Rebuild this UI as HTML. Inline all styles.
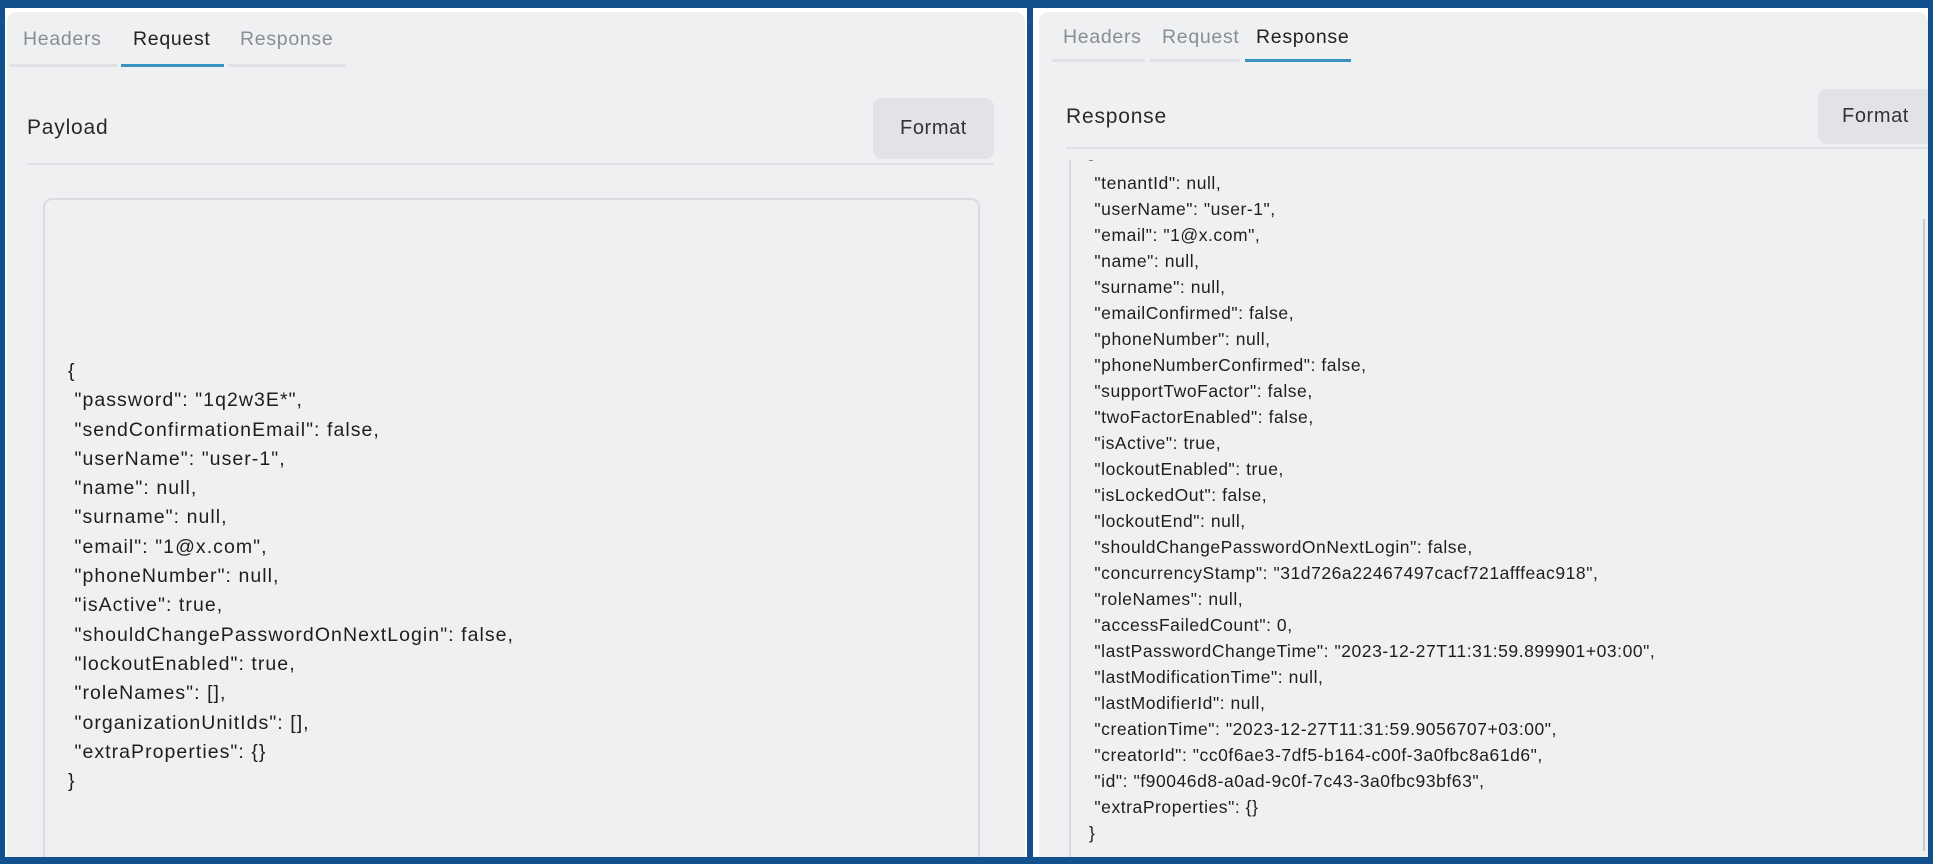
<!DOCTYPE html>
<html><head><meta charset="utf-8"><style>
*{margin:0;padding:0;box-sizing:border-box}
html,body{width:1933px;height:864px;overflow:hidden;background:#12508e;font-family:"Liberation Sans",sans-serif;color:#222}
.white{position:absolute;background:#fff}
.panel{position:absolute;background:#eff0f2;border-radius:10px 10px 0 0;overflow:hidden}
.tab{position:absolute;font-size:19.5px;letter-spacing:0.7px;color:#8a8d91}
.tab.act{color:#222}
.ul{position:absolute;height:3px;background:#dfe1e4}
.ul.act{background:#3d93c0}
.title{position:absolute;font-size:21px;letter-spacing:0.8px;color:#2a2a2a}
.btn{position:absolute;background:#e2e3e6;border-radius:9px;font-size:20px;letter-spacing:0.6px;color:#333;display:flex;align-items:center;justify-content:center}
.sep{position:absolute;height:2px;background:#dfe1e4}
.code{position:absolute;white-space:pre;color:#1e1e1e}
</style></head><body>
<div class="white" style="left:5px;top:8px;width:1022px;height:849px"></div>
<div class="white" style="left:1033px;top:8px;width:895px;height:849px"></div>

<div class="panel" style="left:7px;top:12px;width:1018px;height:845px">
  <div class="tab" style="left:16px;top:16px">Headers</div>
  <div class="tab act" style="left:126px;top:16px">Request</div>
  <div class="tab" style="left:233px;top:16px">Response</div>
  <div class="ul" style="left:3px;top:52px;width:107px"></div>
  <div class="ul act" style="left:114px;top:52px;width:103px"></div>
  <div class="ul" style="left:221px;top:52px;width:118px"></div>
  <div class="title" style="left:20px;top:104px">Payload</div>
  <div class="btn" style="left:866px;top:86px;width:121px;height:61px">Format</div>
  <div class="sep" style="left:20px;top:151px;width:967px"></div>
  <div style="position:absolute;left:36px;top:186px;width:937px;height:700px;border:2px solid #d9dbde;border-radius:9px"></div>
  <div class="code" style="left:61px;top:345px;font-size:19.5px;letter-spacing:1.05px;line-height:29.3px">{
 "password": "1q2w3E*",
 "sendConfirmationEmail": false,
 "userName": "user-1",
 "name": null,
 "surname": null,
 "email": "1@x.com",
 "phoneNumber": null,
 "isActive": true,
 "shouldChangePasswordOnNextLogin": false,
 "lockoutEnabled": true,
 "roleNames": [],
 "organizationUnitIds": [],
 "extraProperties": {}
}</div>
</div>

<div class="panel" style="left:1039px;top:12px;width:889px;height:845px">
  <div class="tab" style="left:24px;top:14px">Headers</div>
  <div class="tab" style="left:123px;top:14px">Request</div>
  <div class="tab act" style="left:217px;top:14px">Response</div>
  <div class="ul" style="left:13px;top:47px;width:93px"></div>
  <div class="ul" style="left:111px;top:47px;width:90px"></div>
  <div class="ul act" style="left:206px;top:47px;width:106px"></div>
  <div class="title" style="left:27px;top:93px">Response</div>
  <div class="btn" style="left:779px;top:77px;width:115px;height:55px">Format</div>
  <div class="sep" style="left:27px;top:135px;width:862px"></div>
  <div style="position:absolute;left:30px;top:148px;width:2px;height:700px;background:#d9dbde"></div>
  <div style="position:absolute;left:884px;top:207px;width:2px;height:632px;background:#c8cacd"></div>
  <div style="position:absolute;left:50px;top:148px;width:4px;height:1px;background:#888"></div>
  <div class="code" style="left:50px;top:158px;font-size:17.5px;letter-spacing:0.55px;line-height:26px"> "tenantId": null,
 "userName": "user-1",
 "email": "1@x.com",
 "name": null,
 "surname": null,
 "emailConfirmed": false,
 "phoneNumber": null,
 "phoneNumberConfirmed": false,
 "supportTwoFactor": false,
 "twoFactorEnabled": false,
 "isActive": true,
 "lockoutEnabled": true,
 "isLockedOut": false,
 "lockoutEnd": null,
 "shouldChangePasswordOnNextLogin": false,
 "concurrencyStamp": "31d726a22467497cacf721afffeac918",
 "roleNames": null,
 "accessFailedCount": 0,
 "lastPasswordChangeTime": "2023-12-27T11:31:59.899901+03:00",
 "lastModificationTime": null,
 "lastModifierId": null,
 "creationTime": "2023-12-27T11:31:59.9056707+03:00",
 "creatorId": "cc0f6ae3-7df5-b164-c00f-3a0fbc8a61d6",
 "id": "f90046d8-a0ad-9c0f-7c43-3a0fbc93bf63",
 "extraProperties": {}
}</div>
</div>
</body></html>
